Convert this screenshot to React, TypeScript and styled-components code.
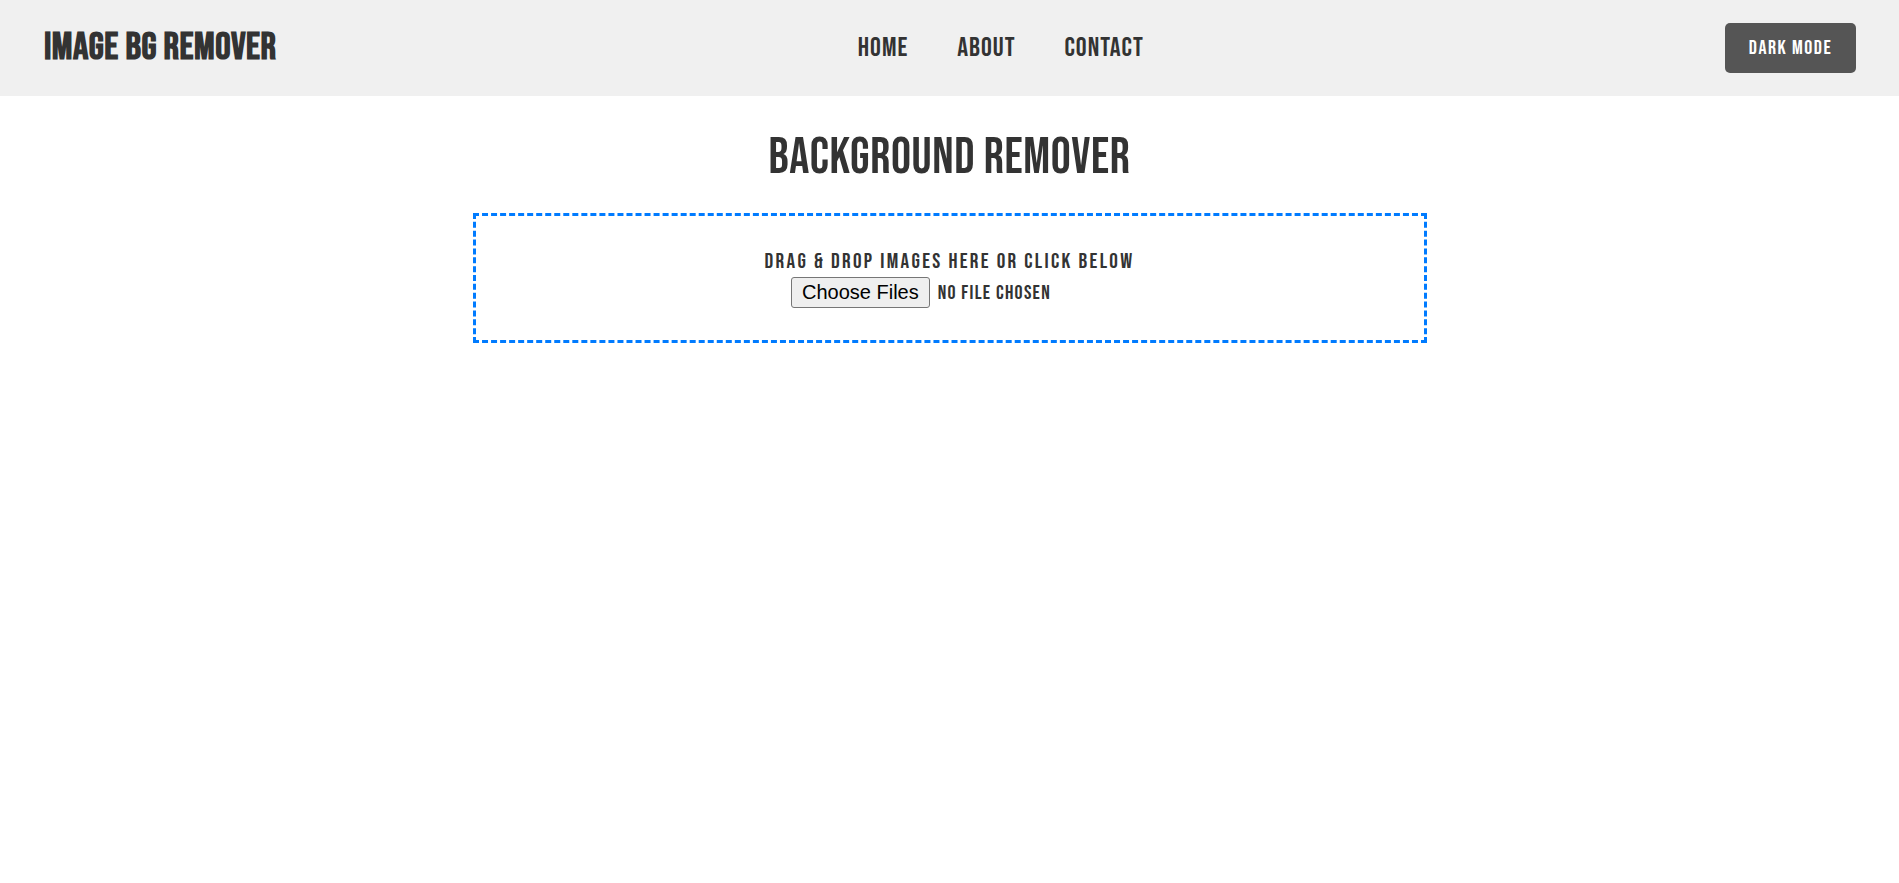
import React from "react";
import styled, { createGlobalStyle } from "styled-components";

const GlobalStyle = createGlobalStyle`
  html, body { margin: 0; padding: 0; background: #ffffff; }
  body { font-family: "Bebas Neue", "Oswald", "Liberation Sans Narrow", sans-serif; color: #333333; }
  * { box-sizing: border-box; }
`;

const Page = styled.div`
  min-height: 883px;
  background: #ffffff;
`;

const Header = styled.header`
  height: 96px;
  background: #f0f0f0;
  display: flex;
  align-items: center;
  justify-content: space-between;
  padding: 0 43px 0 44px;
`;

const Logo = styled.div`
  font-size: 38.4px;
  font-weight: 700;
  letter-spacing: 0.5px;
  line-height: 1;
  color: #333333;
  white-space: nowrap;
`;

const Nav = styled.nav`
  display: flex;
  align-items: center;
  gap: 49px;
`;

const NavLink = styled.a`
  font-size: 27px;
  letter-spacing: 1px;
  line-height: 1;
  color: #333333;
  text-decoration: none;
  cursor: pointer;
`;

const ModeButton = styled.button`
  font-family: "Bebas Neue", sans-serif;
  font-size: 20px;
  letter-spacing: 1.5px;
  color: #ffffff;
  background: #555555;
  border: none;
  border-radius: 5px;
  width: 131px;
  height: 50px;
  padding: 0;
  cursor: pointer;
`;

const Main = styled.main`
  display: flex;
  flex-direction: column;
  align-items: center;
  padding-top: 32px;
`;

const Title = styled.h1`
  margin: 0;
  font-size: 50px;
  font-weight: 400;
  letter-spacing: 0.6px;
  line-height: 60px;
  color: #333333;
`;

const DropZone = styled.div`
  margin-top: 25px;
  width: 954px;
  height: 130px;
  border: 3px dashed #007bff;
  display: flex;
  flex-direction: column;
  align-items: center;
  padding-top: 33px;
`;

const DropText = styled.p`
  margin: 0;
  font-size: 21.4px;
  font-weight: 400;
  letter-spacing: 2.35px;
  line-height: normal;
  color: #333333;
`;

const FileInput = styled.input`
  margin-top: 3px;
  font-family: "Bebas Neue", sans-serif;
  font-size: 20px;
  letter-spacing: 1.3px;
  color: #333333;

  &::file-selector-button {
    font-family: "Liberation Sans", Arial, sans-serif;
    font-size: 20px;
    letter-spacing: 0;
    color: #000000;
    background: #efefef;
    border: 1px solid #767676;
    border-radius: 3px;
    padding: 3px 10px;
    margin-right: 8px;
    cursor: pointer;
  }
`;

export default function App() {
  return (
    <Page>
      <GlobalStyle />
      <Header>
        <Logo>Image BG Remover</Logo>
        <Nav>
          <NavLink>Home</NavLink>
          <NavLink>About</NavLink>
          <NavLink>Contact</NavLink>
        </Nav>
        <ModeButton>Dark Mode</ModeButton>
      </Header>
      <Main>
        <Title>Background Remover</Title>
        <DropZone>
          <DropText>Drag &amp; Drop Images Here or Click Below</DropText>
          <FileInput type="file" multiple accept="image/*" />
        </DropZone>
      </Main>
    </Page>
  );
}
